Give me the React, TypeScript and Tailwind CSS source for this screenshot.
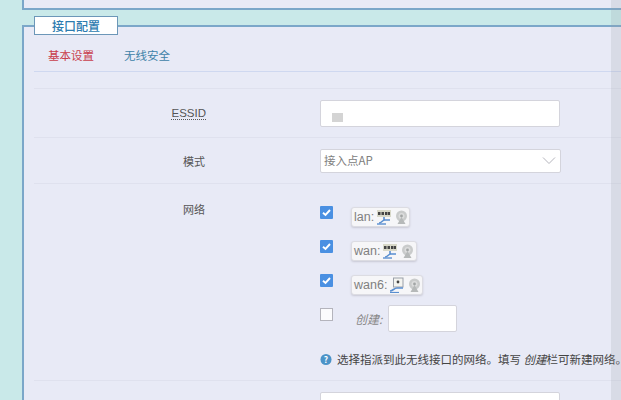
const cjk = { fontFamily: '"Noto Sans CJK SC", "Liberation Sans", sans-serif' };
const latin = { fontFamily: '"Liberation Sans", "Noto Sans CJK SC", sans-serif' };

function Ports() {
  return (
    <svg width="16" height="16" viewBox="0 0 16 16" className="shrink-0">
      <rect x="1" y="1" width="14" height="7" fill="#d8d8c8" />
      <rect x="2" y="3" width="2.5" height="3" fill="#444" />
      <rect x="5.5" y="3" width="2.5" height="3" fill="#444" />
      <rect x="9" y="3" width="2.5" height="3" fill="#444" />
      <rect x="12" y="3" width="2" height="3" fill="#444" />
      <path d="M8 8 V11 M3 14 C6 14 6 11 9 11 H14" stroke="#5a8fd0" strokeWidth="1.6" fill="none" />
      <path d="M1 15 H10" stroke="#5a8fd0" strokeWidth="1.4" />
    </svg>
  );
}

function Monitor() {
  return (
    <svg width="16" height="16" viewBox="0 0 16 16" className="shrink-0">
      <rect x="4.5" y="1" width="9.5" height="9" fill="#f4f4f0" stroke="#9a9fa8" />
      <circle cx="9" cy="5" r="1.4" fill="#444" />
      <path d="M1 14 C4 14 5 11 8 11 H14" stroke="#5a8fd0" strokeWidth="1.6" fill="none" />
      <path d="M1 15.5 H10" stroke="#5a8fd0" strokeWidth="1.2" />
    </svg>
  );
}

function Wifi() {
  return (
    <svg width="15" height="15" viewBox="0 0 15 15" className="shrink-0">
      <circle cx="7.5" cy="6" r="5.5" fill="#c9cbcb" />
      <circle cx="7.5" cy="6" r="3" fill="#dcdddd" />
      <circle cx="7.5" cy="6" r="1.4" fill="#a2a5a5" />
      <path d="M7.5 7 L3.5 14 H11.5 Z" fill="#b6b9b9" />
    </svg>
  );
}

function Check({ on }: { on: boolean }) {
  return on ? (
    <span className="w-[13px] h-[13px] bg-[#4a90e2] rounded-[1px] flex items-center justify-center shrink-0">
      <svg width="11" height="11" viewBox="0 0 11 11">
        <path d="M2 5.8 L4.5 8 L9 3" stroke="#fff" strokeWidth="1.9" fill="none" />
      </svg>
    </span>
  ) : (
    <span className="w-[13px] h-[13px] mt-[3px] bg-[#fbfbfd] border border-[#b4b4bc] shrink-0" />
  );
}

function Badge({ label, w, icon }: { label: string; w: string; icon: React.ReactNode }) {
  return (
    <span className={`${w} h-[20px] mt-[1px] ml-[18px] pl-[2px] flex items-center gap-[2px] bg-[#f6f6f8] border border-[#dcdce2] rounded-[3px] shadow-[0_1px_2px_#c8c8d4] text-[12.5px] text-[#808080]`} style={latin}>
      <span>{label}</span>
      {icon}
      <Wifi />
    </span>
  );
}

function NetRow({ label, w, icon, className }: { label: string; w: string; icon: React.ReactNode; className: string }) {
  return (
    <div className={`flex items-start ${className}`}>
      <Check on />
      <Badge label={label} w={w} icon={icon} />
    </div>
  );
}

export default function App() {
  return (
    <div className="relative w-[621px] h-[400px] overflow-hidden bg-[#c9e9e9] text-[11px]" style={cjk}>
      <div className="ml-[22px] h-[10px] bg-[#e8eaf6] border-l-2 border-b-2 border-[#7ba7c9]" />
      <div className="mt-[15px] ml-[22px] h-[375px] bg-[#e8eaf6] border-l-2 border-t-2 border-[#7ba7c9]">
        <div className="-mt-[11px] ml-[10px] w-[84px] h-[19px] bg-white border border-[#6c97b8] flex items-center justify-center text-[12px] font-medium text-[#2c7cb0]">
          接口配置
        </div>
        <div className="ml-[10px] h-[37px] border-b border-[#cfd8f0] flex items-center gap-[30px] pl-[14px] pt-[5px] text-[11.5px]">
          <span className="text-[#c8404c]">基本设置</span>
          <span className="text-[#3f82a8]">无线安全</span>
        </div>
        <div className="ml-[10px] h-[17px] border-b border-[#dfe1ee]" />

        <div className="ml-[10px] h-[49px] border-b border-[#dfe1ee] flex items-center">
          <div className="w-[172px] shrink-0 text-right text-[#555] text-[11.5px]">
            <span className="border-b border-dotted border-[#555]" style={latin}>ESSID</span>
          </div>
          <div className="ml-[114px] w-[240px] h-[27px] bg-white border border-[#d4d4dc] rounded-[2px] pl-[11px] pt-[12px]">
            <div className="w-[11px] h-[9px] bg-[#d4d4d4]" />
          </div>
        </div>

        <div className="ml-[10px] h-[46px] border-b border-[#dfe1ee] flex items-center">
          <div className="w-[172px] shrink-0 text-right text-[#555] pr-[1px] pt-[2px]">模式</div>
          <div className="ml-[114px] w-[241px] h-[24px] bg-white border border-[#d4d4dc] rounded-[2px] pl-[3px] pr-[4px] flex items-center justify-between text-[#808080] text-[11.5px]">
            <span>接入点AP</span>
            <svg width="14" height="9" viewBox="0 0 14 9">
              <path d="M1 1.5 L7 7.5 L13 1.5" stroke="#b5b5bd" strokeWidth="1" fill="none" />
            </svg>
          </div>
        </div>

        <div className="ml-[10px] h-[197px] border-b border-[#dfe1ee] flex">
          <div className="w-[172px] shrink-0 text-right text-[#555] pr-[1px] pt-[17px]">网络</div>
          <div className="ml-[114px] flex flex-col">
            <NetRow label="lan:" w="w-[59px]" icon={<Ports />} className="mt-[22px] h-[20px]" />
            <NetRow label="wan:" w="w-[66px]" icon={<Ports />} className="mt-[14px] h-[20px]" />
            <NetRow label="wan6:" w="w-[72px]" icon={<Monitor />} className="mt-[14px] h-[20px]" />
            <div className="mt-[11px] h-[27px] flex items-start">
              <Check on={false} />
              <span className="ml-[22px] mt-[5px] italic text-[12px] text-[#888]">创建:</span>
              <span className="ml-[6px] w-[69px] h-[27px] bg-white border border-[#d4d4dc] rounded-[2px]" />
            </div>
            <div className="mt-[19px] flex items-center gap-[5px] whitespace-nowrap text-[#444] text-[11.5px]">
              <svg width="12" height="13" viewBox="0 0 13 13" className="shrink-0">
                <circle cx="6.5" cy="6.5" r="6" fill="#4b93c8" />
                <text x="6.5" y="10" textAnchor="middle" fontSize="9" fontWeight="700" fill="#fff">?</text>
              </svg>
              <span>选择指派到此无线接口的网络。填写 <em>创建</em>栏可新建网络。</span>
            </div>
          </div>
        </div>

        <div className="ml-[10px] flex">
          <div className="w-[172px] shrink-0 text-right text-[#777] pt-[16px]" style={latin}>WMM</div>
          <div className="ml-[114px] mt-[11px] w-[240px] h-[24px] bg-white border border-[#d4d4dc] rounded-[2px] pl-[3px] flex items-center text-[#808080]" style={latin}>
            Enabled
          </div>
        </div>
      </div>
      <div className="absolute top-0 right-0 bottom-0 w-[10px] bg-[#9aa0a8]/20" />
    </div>
  );
}
